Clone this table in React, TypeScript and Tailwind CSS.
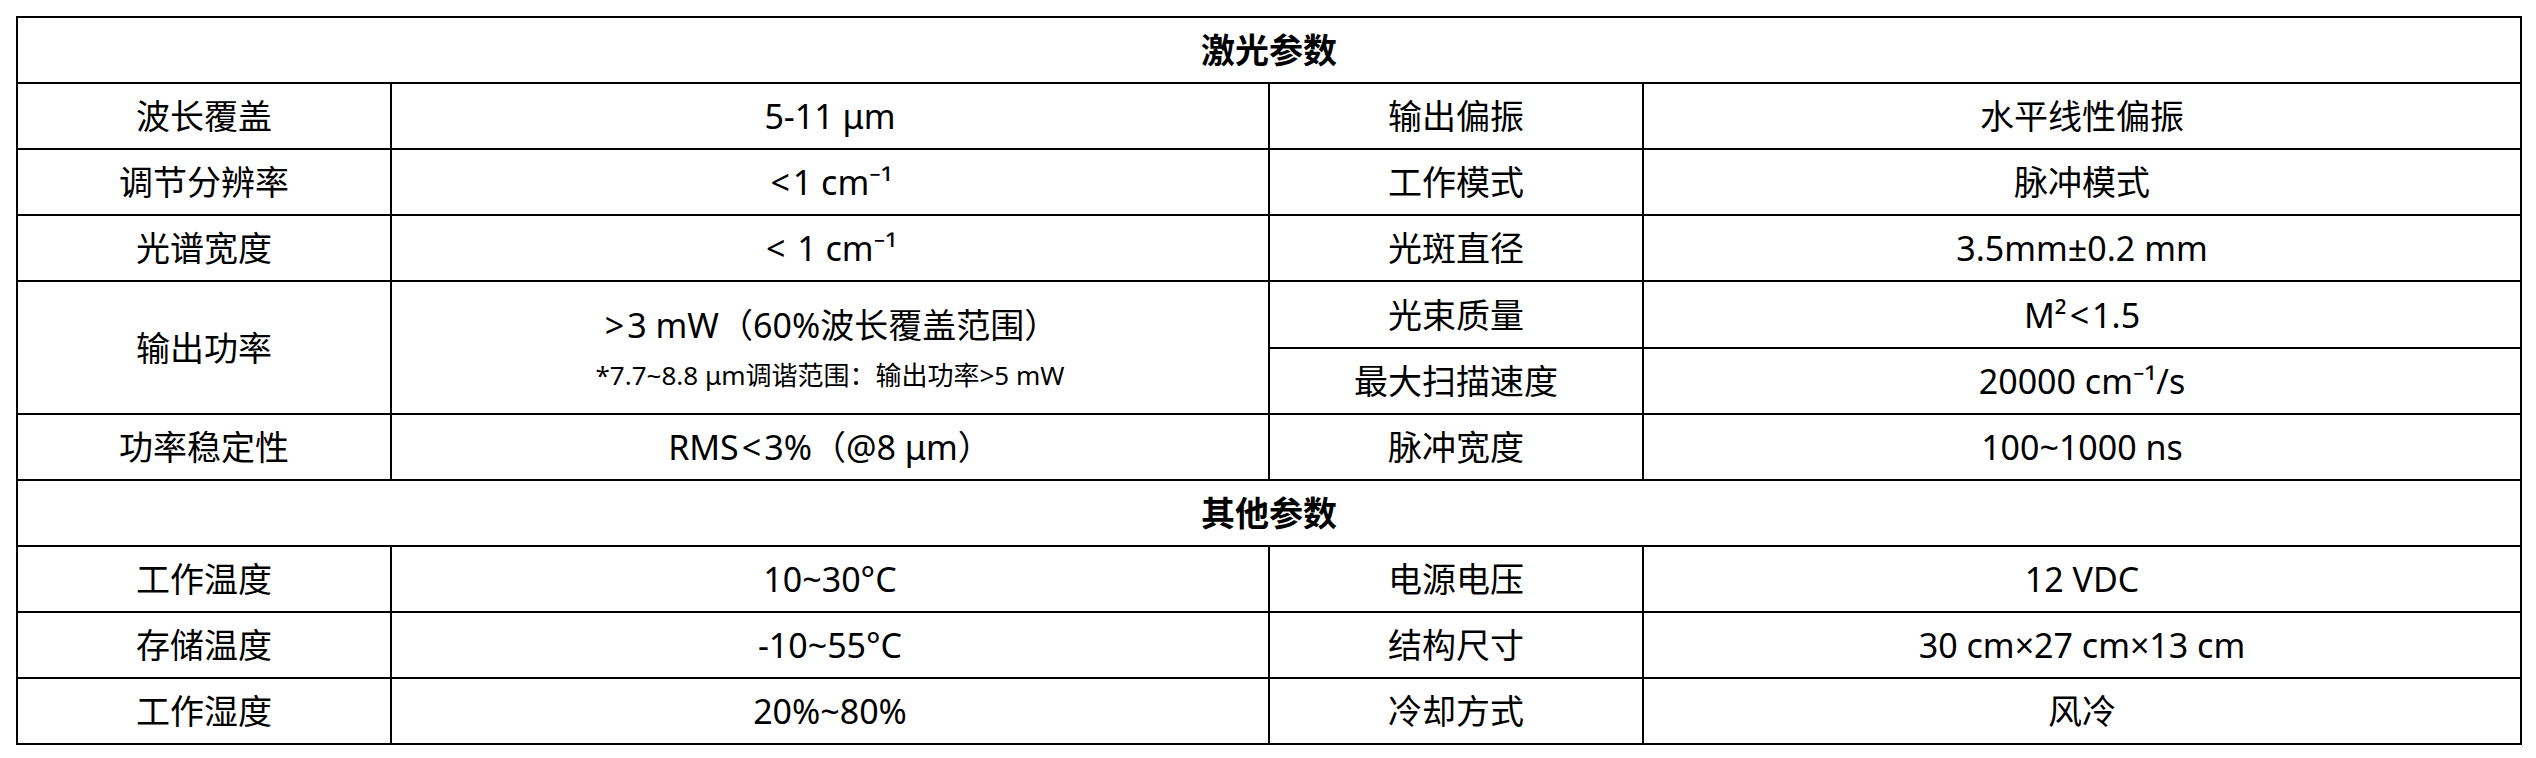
import React from "react";

const cell =
  "border-2 border-black text-center align-middle p-0 text-[34px] leading-[44px] text-black";

function Lt({ c }: { c: string }) {
  return <span className="px-[3px]">{c}</span>;
}

function Header({ title }: { title: string }) {
  return (
    <tr className="h-[66px]">
      <td colSpan={4} className={cell + " font-bold"}>
        {title}
      </td>
    </tr>
  );
}

export default function App() {
  return (
    <div className="bg-white w-[2536px] h-[758px] pt-4 pl-4 font-['Noto_Sans','Noto_Sans_CJK_SC',sans-serif]">
      <table className="border-collapse table-fixed w-[2504px]">
        <colgroup>
          <col className="w-[374px]" />
          <col className="w-[878px]" />
          <col className="w-[374px]" />
          <col className="w-[878px]" />
        </colgroup>
        <tbody>
          <Header title="激光参数" />
          <tr className="h-[66px]">
            <td className={cell}>波长覆盖</td>
            <td className={cell}>5-11 μm</td>
            <td className={cell}>输出偏振</td>
            <td className={cell}>水平线性偏振</td>
          </tr>
          <tr className="h-[66px]">
            <td className={cell}>调节分辨率</td>
            <td className={cell}>
              <Lt c="<" />1 cm⁻¹
            </td>
            <td className={cell}>工作模式</td>
            <td className={cell}>脉冲模式</td>
          </tr>
          <tr className="h-[66px]">
            <td className={cell}>光谱宽度</td>
            <td className={cell}>
              <Lt c="<" /> 1 cm⁻¹
            </td>
            <td className={cell}>光斑直径</td>
            <td className={cell}>3.5mm±0.2 mm</td>
          </tr>
          <tr className="h-[67px]">
            <td className={cell} rowSpan={2}>
              输出功率
            </td>
            <td className={cell} rowSpan={2}>
              <div className="flex flex-col items-center pt-[4px]">
                <div className="leading-[50px]">
                  <Lt c=">" />3 mW（60%波长覆盖范围）
                </div>
                <div className="leading-[50px] text-[26px]">
                  *7.7~8.8 μm调谐范围：输出功率&gt;5 mW
                </div>
              </div>
            </td>
            <td className={cell}>光束质量</td>
            <td className={cell}>
              M²<Lt c="<" />1.5
            </td>
          </tr>
          <tr className="h-[66px]">
            <td className={cell}>最大扫描速度</td>
            <td className={cell}>20000 cm⁻¹/s</td>
          </tr>
          <tr className="h-[66px]">
            <td className={cell}>功率稳定性</td>
            <td className={cell}>
              RMS<Lt c="<" />3%（@8 μm）
            </td>
            <td className={cell}>脉冲宽度</td>
            <td className={cell}>100~1000 ns</td>
          </tr>
          <Header title="其他参数" />
          <tr className="h-[66px]">
            <td className={cell}>工作温度</td>
            <td className={cell}>10~30°C</td>
            <td className={cell}>电源电压</td>
            <td className={cell}>12 VDC</td>
          </tr>
          <tr className="h-[66px]">
            <td className={cell}>存储温度</td>
            <td className={cell}>-10~55°C</td>
            <td className={cell}>结构尺寸</td>
            <td className={cell}>30 cm×27 cm×13 cm</td>
          </tr>
          <tr className="h-[66px]">
            <td className={cell}>工作湿度</td>
            <td className={cell}>20%~80%</td>
            <td className={cell}>冷却方式</td>
            <td className={cell}>风冷</td>
          </tr>
        </tbody>
      </table>
    </div>
  );
}
